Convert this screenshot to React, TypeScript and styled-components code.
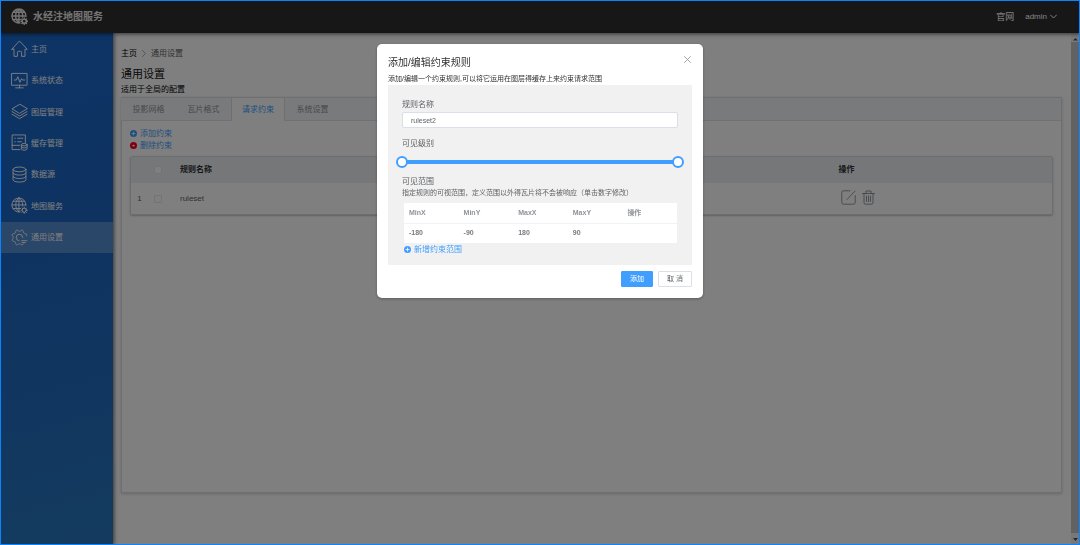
import React, { useState } from "react";
import styled, { createGlobalStyle, css } from "styled-components";

const Global = createGlobalStyle`
  *, *::before, *::after { box-sizing: border-box; }
  html, body, #root { height: 100%; }
  body {
    margin: 0;
    overflow: hidden;
    font-family: "Liberation Sans", "Noto Sans CJK SC", sans-serif;
    font-size: 8px;
    line-height: 12px;
    color: #303133;
  }
  button, input { font: inherit; color: inherit; }
  h1, h2, p, ul { margin: 0; padding: 0; font-weight: 400; }
  a { text-decoration: none; color: inherit; }
`;

const Shell = styled.div`
  display: flex;
  flex-direction: column;
  height: 100%;
  background: #fff;
`;

const Label = styled.span`
  padding-top: 2px;
  line-height: 10px;
`;

const Header = styled.header`
  display: flex;
  align-items: center;
  height: 33px;
  flex: none;
  padding: 0 23px 0 11px;
  background: #2e2e2e;
  color: #fff;
  box-shadow: 0 1px 4px rgba(0, 0, 0, 0.6);
  z-index: 2;
`;

const Brand = styled.div`
  display: flex;
  align-items: center;
  gap: 5px;
  flex: 1;
  font-size: 10px;
  font-weight: 700;
  color: #e8e8e8;
`;

const HeaderLink = styled.a`
  font-size: 9px;
  margin-right: 11px;
`;

const UserButton = styled.button`
  display: flex;
  align-items: center;
  gap: 3px;
  padding: 0;
  border: 0;
  background: none;
`;

const Body = styled.div`
  display: flex;
  flex: 1;
  min-height: 0;
`;

const Sidebar = styled.nav`
  width: 113px;
  flex: none;
  background: linear-gradient(165deg, #1a68cc 0%, #1c66c2 40%, #2876be 100%);
  box-shadow: 1px 0 4px rgba(0, 0, 0, 0.6);
  z-index: 1;
`;

const Menu = styled.div`
  display: flex;
  flex-direction: column;
  height: 220px;
`;

const MenuItem = styled.a<{ $active?: boolean }>`
  display: flex;
  align-items: center;
  flex: 1;
  gap: 3px;
  padding-left: 11px;
  color: #fff;
  background: ${(p) => (p.$active ? "rgba(255,255,255,0.25)" : "transparent")};
`;

const Main = styled.main`
  display: flex;
  flex-direction: column;
  flex: 1;
  min-width: 0;
  padding: 14px 9px 52px 8px;
`;

const Crumbs = styled.div`
  display: flex;
  align-items: center;
  gap: 5px;
  color: #606266;
`;

const CrumbHome = styled(Label)`
  color: #000;
`;

const Title = styled.h1`
  margin-top: 6px;
  font-size: 11px;
  line-height: 18px;
  color: #111;
`;

const Subtitle = styled.p`
  padding-top: 1px;
  color: #000;
`;

const Panel = styled.section`
  flex: 1;
  margin-top: 1px;
  border: 1px solid #dcdfe6;
  box-shadow: 0 1px 3px rgba(0, 0, 0, 0.2);
`;

const Tabs = styled.div`
  display: flex;
  height: 23px;
  margin-left: -1px;
  background: #f2f5f8;
  border-bottom: 1px solid #e0e3e8;
`;

const Tab = styled.button<{ $active?: boolean }>`
  width: 55px;
  height: 23px;
  padding: 0;
  border: 0 solid #dcdfe6;
  background: none;
  color: #909399;
  ${(p) =>
    p.$active &&
    css`
      width: 54px;
      border-width: 0 1px;
      background: #fff;
      color: #409eff;
    `}
`;

const PanelBody = styled.div`
  padding: 6px 8px;
`;

const Actions = styled.div`
  display: flex;
  flex-direction: column;
  align-items: flex-start;
`;

const LinkButton = styled.button`
  display: flex;
  align-items: center;
  gap: 3px;
  padding: 0;
  border: 0;
  background: none;
  color: #409eff;
`;

const RuleTable = styled.table`
  width: 100%;
  margin-top: 5px;
  table-layout: fixed;
  border-collapse: separate;
  border-spacing: 0;
  border: 1px solid #d8dbe0;
  border-radius: 2px;
  box-shadow: 0 1px 2px rgba(0, 0, 0, 0.25);
  th, td { padding: 0; text-align: left; color: #606266; }
  th { height: 26px; background: #ebeef2; color: #303133; font-weight: 700; }
  td { height: 31px; }
`;

const IndexCell = styled.td`
  && { text-align: center; }
`;

const Check = styled.input`
  display: block;
  appearance: none;
  width: 8px;
  height: 8px;
  margin: 0 6px;
  border: 1px solid #e4e7ed;
  border-radius: 1px;
  background: #fff;
`;

const RowTools = styled.div`
  display: flex;
  gap: 6px;
  padding: 0 0 2px 2px;
`;

const IconButton = styled.button`
  display: flex;
  padding: 0;
  border: 0;
  background: none;
  color: #777f88;
`;

const Scrollbar = styled.div`
  display: flex;
  flex-direction: column;
  align-items: center;
  width: 9px;
  flex: none;
  padding: 4px 0;
  background: #f1f1f1;
`;

const Thumb = styled.div`
  flex: 1;
  width: 100%;
  margin: 1px 0 4px;
  background: #c4c4c4;
`;

const Overlay = styled.div`
  position: fixed;
  inset: 0;
  display: flex;
  justify-content: center;
  align-items: flex-start;
  padding-top: 44px;
  background: rgba(0, 0, 0, 0.5);
  z-index: 10;
`;

const WindowFrame = styled.div`
  position: fixed;
  inset: 0;
  border: 1px solid #0a84ff;
  pointer-events: none;
  z-index: 20;
`;

const Dialog = styled.div`
  width: 326px;
  padding: 10px 11px 11px;
  border-radius: 5px;
  background: #fff;
  box-shadow: 0 1px 3px rgba(0, 0, 0, 0.3);
  color: #606266;
`;

const DialogHead = styled.div`
  display: flex;
  justify-content: space-between;
  align-items: flex-start;
`;

const DialogTitle = styled.h2`
  padding-top: 2px;
  font-size: 10px;
  line-height: 14px;
  color: #303133;
`;

const Close = styled.button`
  display: flex;
  padding: 2px 1px;
  border: 0;
  background: none;
  color: #909399;
`;

const Note = styled.p`
  margin-top: 3px;
  font-size: 7px;
  line-height: 12px;
  color: #303133;
  white-space: nowrap;
`;

const Form = styled.div`
  padding: 13px 14px 10px;
  background: #f1f1f1;
`;

const FieldLabel = styled.label`
  display: block;
  padding-top: 2px;
  line-height: 10px;
`;

const TextInput = styled.input`
  display: block;
  width: 100%;
  height: 16px;
  margin: 2px 0 9px;
  padding: 0 8px;
  border: 1px solid #dcdfe6;
  border-radius: 2px;
  background: #fff;
  font-size: 7px;
  outline: none;
`;

const Slider = styled.div`
  position: relative;
  height: 4px;
  margin: 11px 0;
  border-radius: 2px;
  background: #409eff;
`;

const Range = styled.input`
  position: absolute;
  top: -4px;
  left: -6px;
  width: calc(100% + 12px);
  height: 12px;
  margin: 0;
  appearance: none;
  background: none;
  pointer-events: none;
  &::-webkit-slider-thumb {
    appearance: none;
    width: 12px;
    height: 12px;
    border: 2px solid #409eff;
    border-radius: 50%;
    background: #fff;
    pointer-events: auto;
  }
`;

const Hint = styled.p`
  font-size: 7px;
  line-height: 12px;
  white-space: nowrap;
`;

const ExtentTable = styled.table`
  width: calc(100% - 3px);
  margin: 4px 0 0 2px;
  table-layout: fixed;
  border-collapse: collapse;
  background: #fff;
  font-size: 7px;
  th, td { height: 20px; padding: 0 0 0 5px; text-align: left; font-weight: 700; color: #909399; }
  th { border-bottom: 1px solid #f0f2f5; }
  td { color: #777a80; }
`;

const AddExtent = styled(LinkButton)`
  margin-left: 2px;
`;

const Footer = styled.div`
  display: flex;
  justify-content: flex-end;
  gap: 5px;
  margin-top: 6px;
`;

const Button = styled.button<{ $primary?: boolean }>`
  width: ${(p) => (p.$primary ? 32 : 34)}px;
  height: 16px;
  padding: 0;
  border: 1px solid ${(p) => (p.$primary ? "#409eff" : "#dcdfe6")};
  border-radius: 1px;
  background: ${(p) => (p.$primary ? "#409eff" : "#fff")};
  color: ${(p) => (p.$primary ? "#fff" : "#606266")};
  font-size: 7px;
  line-height: 12px;
`;

const Svg = styled.svg`
  display: block;
  flex: none;
  fill: none;
  stroke: currentColor;
  stroke-linecap: round;
  stroke-linejoin: round;
`;

type IconName = "home" | "status" | "layers" | "cache" | "db" | "globe" | "gear";

/* Outline of a soft eight-lobed cog, open at the lower right. */
const cogOutline = Array.from({ length: 81 }, (_, i) => {
  const angle = 1.05 + (i / 80) * 5;
  const radius = 7.4 + 0.9 * Math.cos(8 * angle + Math.PI);
  return `${(9 + radius * Math.cos(angle)).toFixed(2)} ${(9 + radius * Math.sin(angle)).toFixed(2)}`;
}).join("L");

const shapes: Record<IconName, React.ReactNode> = {
  home: <path d="M.8 9.8 9 1l8.200 8.800h-2.400v7.500h-3.600v-4.300q0-1-1-1H7.800q-1 0-1 1v4.300H3.200V9.800Z" />,
  status: (
    <>
      <rect x="1" y="1.5" width="16" height="12.5" />
      <path d="M9 14v2.500M5 16.800h8M3.500 8.500h2.200L7.200 5l2.300 6 1.700-4 1 1.500h2.300" />
    </>
  ),
  layers: <path d="M9 1.500 1 6.200l8 4.800 8-4.800ZM1 9l8 4.800L17 9M1 11.800l8 4.800 8-4.800" />,
  cache: (
    <>
      <path d="M9.500 16.500H1.200V1h14v8M1.200 12h8M4 4.500h.600M4 8.200h.600M7 4.500h5.500M7 8.200h4" />
      <ellipse cx="14" cy="11.3" rx="3" ry="1.3" />
      <path d="M11 11.300v4.600c0 1.700 6 1.700 6 0v-4.600M11 13.600c0 1.700 6 1.700 6 0" />
    </>
  ),
  db: (
    <>
      <ellipse cx="9" cy="3.6" rx="6.8" ry="2.5" />
      <path d="M2.200 3.600v11c0 3.200 13.600 3.200 13.600 0v-11M2.200 7.300c0 3.200 13.600 3.200 13.600 0M2.200 11c0 3.200 13.600 3.200 13.600 0" />
    </>
  ),
  globe: (
    <>
      <path d="M9.500 15.800A7.400 7.400 0 1 1 15.800 9M8.400 1v14.800M1 8.400h14.800M2.400 4.500h12M2.400 12.200h7.800M8.400 1C3.800 4 3.800 12.500 8.400 15.800M8.400 1c3.400 2.300 4.300 5.600 3.800 8.600" />
      <circle cx="14" cy="14" r="2.2" />
      <path d="M14 10.600v1.200M14 16.200v1.200M10.600 14h1.200M16.200 14h1.200M11.600 11.600l.8.800M15.600 15.600l.8.800M16.400 11.600l-.8.800M12.400 15.600l-.8.800" />
    </>
  ),
  gear: (
    <>
      <path d={`M${cogOutline}`} />
      <path d="M8.600 12.500A3.500 3.500 0 1 1 12.500 9M11.200 12.400h5.600M11.800 14.400h3.400" />
    </>
  ),
};

const Icon = ({ name, weight = 1 }: { name: IconName; weight?: number }) => (
  <Svg width="17" height="17" viewBox="0 0 18 18" strokeWidth={weight} aria-hidden="true">
    {shapes[name]}
  </Svg>
);

const Dot = ({ color, minus }: { color: string; minus?: boolean }) => (
  <Svg width="7" height="7" viewBox="0 0 14 14" aria-hidden="true">
    <circle cx="7" cy="7" r="7" fill={color} stroke="none" />
    <path d={minus ? "M6.500 7h1" : "M4 7h6M7 4v6"} stroke="#fff" strokeWidth={minus ? 3.5 : 1.6} />
  </Svg>
);

const Arrow = ({ down }: { down?: boolean }) => (
  <Svg width="5" height="4" viewBox="0 0 5 4" aria-hidden="true">
    <path d={down ? "M0 1h5L2.500 4Z" : "M0 3.500h5L2.500 1Z"} fill="#505050" stroke="none" />
  </Svg>
);

const menu: { icon: IconName; label: string }[] = [
  { icon: "home", label: "主页" },
  { icon: "status", label: "系统状态" },
  { icon: "layers", label: "图层管理" },
  { icon: "cache", label: "缓存管理" },
  { icon: "db", label: "数据源" },
  { icon: "globe", label: "地图服务" },
  { icon: "gear", label: "通用设置" },
];

const tabs = ["投影网格", "瓦片格式", "请求约束", "系统设置"];

export default function App() {
  const [name, setName] = useState("ruleset2");
  const [low, setLow] = useState(0);
  const [high, setHigh] = useState(20);

  return (
    <>
      <Global />
      <Shell>
        <Header>
          <Brand>
            <Icon name="globe" weight={1.5} />
            <span>水经注地图服务</span>
          </Brand>
          <HeaderLink href="#">官网</HeaderLink>
          <UserButton>
            admin
            <Svg width="7" height="7" viewBox="0 0 7 7" aria-hidden="true">
              <path d="M.5 2l3 3 3-3" />
            </Svg>
          </UserButton>
        </Header>
        <Body>
          <Sidebar>
            <Menu>
              {menu.map((m) => (
                <MenuItem key={m.label} href="#" $active={m.icon === "gear"}>
                  <Icon name={m.icon} />
                  <Label>{m.label}</Label>
                </MenuItem>
              ))}
            </Menu>
          </Sidebar>
          <Main>
            <Crumbs>
              <CrumbHome as="a" href="#">
                主页
              </CrumbHome>
              <Svg width="4" height="7" viewBox="0 0 4 7" aria-hidden="true">
                <path d="M.5.5l3 3-3 3" stroke="#a8abb2" />
              </Svg>
              <Label>通用设置</Label>
            </Crumbs>
            <Title>通用设置</Title>
            <Subtitle>适用于全局的配置</Subtitle>
            <Panel>
              <Tabs role="tablist">
                {tabs.map((t, i) => (
                  <Tab key={t} role="tab" aria-selected={i === 2} $active={i === 2}>
                    {t}
                  </Tab>
                ))}
              </Tabs>
              <PanelBody>
                <Actions>
                  <LinkButton>
                    <Dot color="#409eff" />
                    <Label>添加约束</Label>
                  </LinkButton>
                  <LinkButton>
                    <Dot color="#ff0020" minus />
                    <Label>删除约束</Label>
                  </LinkButton>
                </Actions>
                <RuleTable>
                  <colgroup>
                    <col style={{ width: 17 }} />
                    <col style={{ width: 32 }} />
                    <col style={{ width: "71.5%" }} />
                    <col />
                  </colgroup>
                  <thead>
                    <tr>
                      <th />
                      <th>
                        <Check type="checkbox" aria-label="全选" />
                      </th>
                      <th>规则名称</th>
                      <th>操作</th>
                    </tr>
                  </thead>
                  <tbody>
                    <tr>
                      <IndexCell>1</IndexCell>
                      <td>
                        <Check type="checkbox" aria-label="ruleset" />
                      </td>
                      <td>ruleset</td>
                      <td>
                        <RowTools>
                          <IconButton aria-label="编辑">
                            <Svg width="15" height="15" viewBox="0 0 15 15" strokeWidth="0.8">
                              <path d="M9 .8H2.500Q.8.800.8 2.500v10Q.8 14.200 2.500 14.200h10q1.700 0 1.700-1.700V5.500M6 9.500 14 1" />
                            </Svg>
                          </IconButton>
                          <IconButton aria-label="删除">
                            <Svg width="13" height="15" viewBox="0 0 13 15" strokeWidth="0.8">
                              <path d="M.5 3.500h12M4 3.500V1h5v2.500M2 3.500v9.200q0 1.500 1.500 1.500h6q1.500 0 1.500-1.500V3.500M4.500 6v5.500M6.500 6v5.500M8.500 6v5.500" />
                            </Svg>
                          </IconButton>
                        </RowTools>
                      </td>
                    </tr>
                  </tbody>
                </RuleTable>
              </PanelBody>
            </Panel>
          </Main>
          <Scrollbar>
            <Arrow />
            <Thumb />
            <Arrow down />
          </Scrollbar>
        </Body>
      </Shell>
      <Overlay>
        <Dialog role="dialog" aria-modal="true" aria-labelledby="dialog-title">
          <DialogHead>
            <DialogTitle id="dialog-title">添加/编辑约束规则</DialogTitle>
            <Close aria-label="关闭">
              <Svg width="7" height="7" viewBox="0 0 7 7" strokeWidth="0.8">
                <path d="M.5.5l6 6M6.500.500l-6 6" />
              </Svg>
            </Close>
          </DialogHead>
          <Note>添加/编辑一个约束规则,可以将它运用在图层得缓存上来约束请求范围</Note>
          <Form>
            <FieldLabel htmlFor="rule-name">规则名称</FieldLabel>
            <TextInput id="rule-name" value={name} onChange={(e) => setName(e.target.value)} />
            <FieldLabel htmlFor="level-min">可见级别</FieldLabel>
            <Slider>
              <Range
                id="level-min"
                type="range"
                min={0}
                max={20}
                value={low}
                onChange={(e) => setLow(Math.min(+e.target.value, high))}
              />
              <Range
                type="range"
                aria-label="可见级别"
                min={0}
                max={20}
                value={high}
                onChange={(e) => setHigh(Math.max(+e.target.value, low))}
              />
            </Slider>
            <FieldLabel as="div">可见范围</FieldLabel>
            <Hint>指定规则的可视范围，定义范围以外得瓦片将不会被响应（单击数字修改）</Hint>
            <ExtentTable>
              <thead>
                <tr>
                  <th>MinX</th>
                  <th>MinY</th>
                  <th>MaxX</th>
                  <th>MaxY</th>
                  <th>操作</th>
                </tr>
              </thead>
              <tbody>
                <tr>
                  <td>-180</td>
                  <td>-90</td>
                  <td>180</td>
                  <td>90</td>
                  <td />
                </tr>
              </tbody>
            </ExtentTable>
            <AddExtent>
              <Dot color="#409eff" />
              <Label>新增约束范围</Label>
            </AddExtent>
          </Form>
          <Footer>
            <Button $primary>添加</Button>
            <Button>取 消</Button>
          </Footer>
        </Dialog>
      </Overlay>
      <WindowFrame />
    </>
  );
}
